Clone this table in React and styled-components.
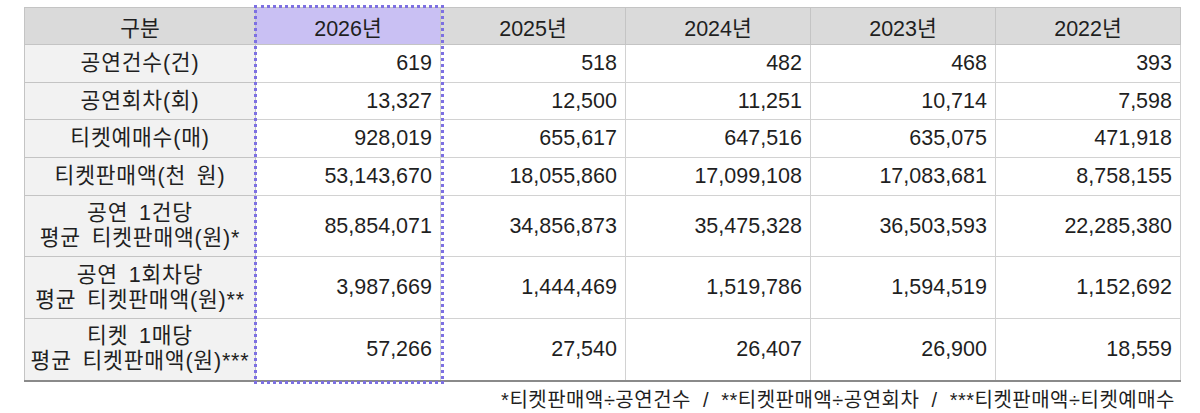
import React from "react";
import styled, { createGlobalStyle } from "styled-components";

const GlobalStyle = createGlobalStyle`
  html, body {
    margin: 0;
    padding: 0;
    background: #ffffff;
  }
  body {
    font-family: "Liberation Sans", "Noto Sans CJK KR", sans-serif;
    color: #1f1f1f;
  }
`;

const FIRST_COL = 231;
const YEAR_COL = 185;

const Page = styled.div`
  padding: 7px 0 0 24px;
  width: 1157px;
`;

const TableWrap = styled.div`
  position: relative;
`;

const Table = styled.table`
  width: 100%;
  border-collapse: collapse;
  table-layout: fixed;
  font-size: 21.5px;
  border-bottom: 2px solid #8a8a8a;
`;

const HeadCell = styled.th`
  height: 36px;
  padding: 0;
  font-weight: 400;
  text-align: center;
  background: ${(p) => (p.$active ? "#c9c0f3" : "#dadada")};
  border: 1px solid #c4c4c4;
`;

const LabelCell = styled.td`
  height: ${(p) => (p.$tall ? "60.7px" : "36.7px")};
  padding: 0 2px;
  text-align: center;
  background: #f2f2f2;
  border: 1px solid #c4c4c4;
  line-height: 25px;
  letter-spacing: 0.8px;
  word-spacing: 4px;
`;

const ValueCell = styled.td`
  padding: 0 8px 0 0;
  text-align: right;
  background: #ffffff;
  border: 1px solid #d2d2d2;
`;

const Highlight = styled.div`
  position: absolute;
  top: -2px;
  bottom: -2px;
  left: ${FIRST_COL - 1}px;
  width: ${YEAR_COL - 1}px;
  border: 3px dotted #7d70e2;
  pointer-events: none;
`;

const Note = styled.p`
  margin: 2px 6px 0 0;
  text-align: right;
  font-size: 20px;
  letter-spacing: 0.5px;
  white-space: pre;
`;

const years = ["2026년", "2025년", "2024년", "2023년", "2022년"];

const rows = [
  { label: ["공연건수(건)"], values: ["619", "518", "482", "468", "393"] },
  { label: ["공연회차(회)"], values: ["13,327", "12,500", "11,251", "10,714", "7,598"] },
  { label: ["티켓예매수(매)"], values: ["928,019", "655,617", "647,516", "635,075", "471,918"] },
  { label: ["티켓판매액(천 원)"], values: ["53,143,670", "18,055,860", "17,099,108", "17,083,681", "8,758,155"] },
  {
    label: ["공연 1건당", "평균 티켓판매액(원)*"],
    values: ["85,854,071", "34,856,873", "35,475,328", "36,503,593", "22,285,380"],
  },
  {
    label: ["공연 1회차당", "평균 티켓판매액(원)**"],
    values: ["3,987,669", "1,444,469", "1,519,786", "1,594,519", "1,152,692"],
  },
  {
    label: ["티켓 1매당", "평균 티켓판매액(원)***"],
    values: ["57,266", "27,540", "26,407", "26,900", "18,559"],
  },
];

export default function App() {
  return (
    <Page>
      <GlobalStyle />
      <TableWrap>
        <Table>
          <colgroup>
            <col style={{ width: FIRST_COL }} />
            {years.map((y) => (
              <col key={y} style={{ width: YEAR_COL }} />
            ))}
          </colgroup>
          <thead>
            <tr>
              <HeadCell>구분</HeadCell>
              {years.map((y, i) => (
                <HeadCell key={y} $active={i === 0}>
                  {y}
                </HeadCell>
              ))}
            </tr>
          </thead>
          <tbody>
            {rows.map((row) => (
              <tr key={row.label.join()}>
                <LabelCell $tall={row.label.length > 1}>
                  {row.label.map((line, i) => (
                    <React.Fragment key={line}>
                      {i > 0 && <br />}
                      {line}
                    </React.Fragment>
                  ))}
                </LabelCell>
                {row.values.map((v, i) => (
                  <ValueCell key={i}>{v}</ValueCell>
                ))}
              </tr>
            ))}
          </tbody>
        </Table>
        <Highlight />
      </TableWrap>
      <Note>*티켓판매액÷공연건수  /  **티켓판매액÷공연회차  /  ***티켓판매액÷티켓예매수</Note>
    </Page>
  );
}
